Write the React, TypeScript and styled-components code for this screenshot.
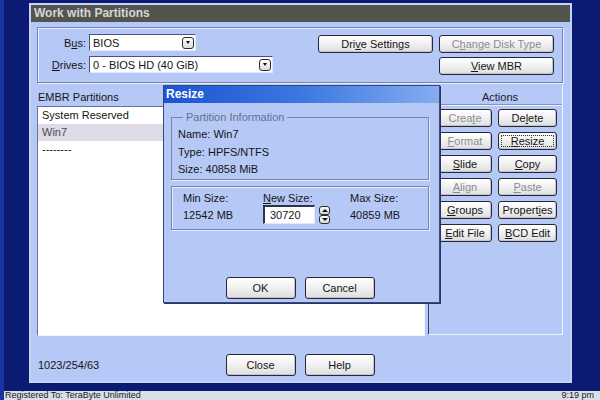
import React from 'react';
import styled, { createGlobalStyle, css } from 'styled-components';

const GlobalStyle = createGlobalStyle`
  html, body {
    margin: 0;
    padding: 0;
    background: #0b1a72;
  }
  body {
    font-family: "Liberation Sans", Arial, sans-serif;
    font-size: 11px;
    color: #151515;
  }
  * {
    box-sizing: border-box;
  }
`;

const Screen = styled.div`
  width: 600px;
  height: 400px;
  overflow: hidden;
  display: flex;
  flex-direction: column;
  background: #0b1a72;
  border-left: 4px solid #1a34a0;
`;

const Window = styled.div`
  position: relative;
  width: 543px;
  height: 380px;
  margin: 3px 0 0 25px;
  border: 2px solid #c6d3f7;
  background: #b6c8f6;
  display: flex;
  flex-direction: column;
`;

const TitleBar = styled.div`
  height: 17px;
  line-height: 17px;
  padding-left: 3px;
  background: #54544e;
  color: #d6d6d6;
  font-size: 12px;
  font-weight: bold;
`;

const Body = styled.div`
  height: 359px;
  padding: 5px 7px 5px 6px;
  display: flex;
  flex-direction: column;
`;

const etched = css`
  border: 1px solid #7886ac;
  box-shadow: inset 1px 1px 0 #e6ecff, 1px 1px 0 #e6ecff;
`;

const TopGroup = styled.div`
  ${etched};
  height: 56px;
  display: flex;
  padding: 6px 8px 0 0;
`;

const ComboGrid = styled.div`
  display: grid;
  grid-template-columns: 48px auto;
  column-gap: 3px;
  row-gap: 5px;
  align-content: start;
  align-items: center;
`;

const FieldLabel = styled.span`
  text-align: right;
`;

const Combo = styled.div<{ $width: number }>`
  width: ${({ $width }) => $width}px;
  height: 17px;
  background: #fff;
  border: 1px solid;
  border-color: #44547c #e2e8ff #e2e8ff #44547c;
  display: flex;
  align-items: center;
  padding-left: 3px;
`;

const DropArrow = styled.span`
  width: 12px;
  height: 12px;
  margin-left: auto;
  margin-right: 1px;
  border: 1px solid #2c2c34;
  border-radius: 3px;
  background: linear-gradient(#ffffff, #dcdcdc);
  display: flex;
  align-items: center;
  justify-content: center;
  &::after {
    content: '';
    border-left: 2.5px solid transparent;
    border-right: 2.5px solid transparent;
    border-top: 3px solid #111;
  }
`;

const TopButtons = styled.div`
  margin-left: auto;
  padding-top: 1px;
  display: grid;
  grid-template-columns: 115px 115px;
  grid-auto-rows: 18px;
  column-gap: 6px;
  row-gap: 4px;
`;

const Btn = styled.button<{ $off?: boolean; $focus?: boolean }>`
  height: 100%;
  padding: 0;
  font-family: inherit;
  font-size: 11px;
  color: ${({ $off }) => ($off ? '#8c8c94' : '#151515')};
  background: linear-gradient(#ffffff, #f2f2f2 45%, #dedede);
  border: 1px solid #26283a;
  border-radius: 3px;
  box-shadow: inset -1px -1px 0 #c4c4cc;
  outline: ${({ $focus }) => ($focus ? '1px dotted #333' : 'none')};
  outline-offset: -4px;
  white-space: nowrap;
  u {
    text-decoration: underline;
  }
`;

const Middle = styled.div`
  height: 251px;
  margin-top: 2px;
  display: flex;
`;

const ListColumn = styled.div`
  width: 388px;
  display: flex;
  flex-direction: column;
`;

const ListTitle = styled.div`
  height: 21px;
  padding: 6px 0 0 1px;
  line-height: 13px;
`;

const ListBox = styled.div`
  flex: 1;
  background: #fff;
  border: 1px solid;
  border-color: #6474a0 #f4f6ff #f4f6ff #6474a0;
`;

const ListRow = styled.div<{ $selected?: boolean }>`
  height: 17px;
  line-height: 17px;
  padding-left: 4px;
  background: ${({ $selected }) => ($selected ? '#dedbe6' : 'transparent')};
  color: ${({ $selected }) => ($selected ? '#4a4a52' : '#151515')};
`;

const ActionsPanel = styled.div`
  width: 135px;
  margin-left: 3px;
  border-left: 1px solid #34446e;
  border-right: 1px solid #eef2ff;
  border-bottom: 1px solid #eef2ff;
  height: 250px;
`;

const ActionsTitle = styled.div`
  height: 20px;
  margin-left: 9px;
  padding-top: 6px;
  line-height: 13px;
  text-align: center;
  border-bottom: 1px solid #8494bc;
  box-shadow: 0 1px 0 #e6ecff;
  color: #1c1c30;
`;

const ActionGrid = styled.div`
  display: grid;
  grid-template-columns: 54px 59px;
  grid-auto-rows: 18px;
  column-gap: 6px;
  row-gap: 5px;
  padding: 4px 0 0 9px;
`;

const BottomRow = styled.div`
  height: 22px;
  margin-top: 18px;
  display: grid;
  grid-template-columns: 1fr auto 1fr;
  align-items: center;
`;

const Geometry = styled.span`
  padding-left: 1px;
`;

const ButtonPair = styled.div`
  display: grid;
  grid-template-columns: 70px 70px;
  grid-auto-rows: 22px;
  column-gap: 9px;
`;

const Dialog = styled.div`
  position: absolute;
  left: 132px;
  top: 80px;
  width: 277px;
  height: 218px;
  background: #b6c8f6;
  border: 1px solid #3a4a74;
  box-shadow: 1px 1px 0 #28346a;
  display: flex;
  flex-direction: column;
`;

const DialogTitle = styled.div`
  height: 17px;
  line-height: 17px;
  padding-left: 2px;
  color: #fff;
  font-size: 12px;
  font-weight: bold;
  background: linear-gradient(90deg, #1a54d2, #3b78e0 50%, #86acf0);
`;

const DialogBody = styled.div`
  flex: 1;
  padding: 8px 10px 3px 7px;
  display: flex;
  flex-direction: column;
`;

const InfoGroup = styled.fieldset`
  margin: 0;
  height: 69px;
  padding: 2px 6px 0 6px;
  border: 1px solid #7886ac;
  box-shadow: 1px 1px 0 #e6ecff;
`;

const Legend = styled.legend`
  margin-left: 5px;
  padding: 0 3px;
  line-height: 13px;
  color: #68708c;
`;

const InfoLine = styled.div`
  height: 17.5px;
  line-height: 17.5px;
`;

const SizeGroup = styled.div`
  ${etched};
  height: 44px;
  margin-top: 6px;
  padding: 4px 0 0 11px;
  display: grid;
  grid-template-columns: 80px 87px auto;
  grid-template-rows: 13px 19px;
  row-gap: 1px;
  align-items: center;
`;

const Spin = styled.div`
  display: flex;
  align-items: center;
  gap: 4px;
`;

const NumberField = styled.div`
  width: 52px;
  height: 19px;
  padding-left: 5px;
  line-height: 17px;
  background: #fff;
  border: 1px solid;
  border-width: 2px 1px 1px 2px;
  border-color: #30344a #e2e8ff #e2e8ff #30344a;
`;

const SpinButtons = styled.div`
  display: grid;
  grid-auto-rows: 9px;
  row-gap: 0;
`;

const SpinBtn = styled.span<{ $up?: boolean }>`
  width: 11px;
  border: 1px solid #2c2c34;
  border-radius: 3px;
  background: linear-gradient(#ffffff, #d8d8d8);
  display: flex;
  align-items: center;
  justify-content: center;
  &::after {
    content: '';
    border-left: 3px solid transparent;
    border-right: 3px solid transparent;
    ${({ $up }) => ($up ? 'border-bottom: 3px solid #111;' : 'border-top: 3px solid #111;')}
  }
`;

const DialogButtons = styled(ButtonPair)`
  margin-top: auto;
  justify-content: center;
`;

const StatusBar = styled.div`
  height: 9px;
  margin-top: auto;
  margin-left: -4px;
  padding: 0 6px 0 5px;
  overflow: hidden;
  display: flex;
  justify-content: space-between;
  align-items: center;
  background: #dadee8;
  color: #1a1a1a;
  font-size: 9px;
  line-height: 9px;
`;

const actions: { label: React.ReactNode; off?: boolean; focus?: boolean }[] = [
  { label: <>Crea<u>t</u>e</>, off: true },
  { label: <>De<u>l</u>ete</> },
  { label: <><u>F</u>ormat</>, off: true },
  { label: <><u>R</u>esize</>, focus: true },
  { label: <><u>S</u>lide</> },
  { label: <><u>C</u>opy</> },
  { label: <><u>A</u>lign</>, off: true },
  { label: <><u>P</u>aste</>, off: true },
  { label: <><u>G</u>roups</> },
  { label: <>Propert<u>i</u>es</> },
  { label: <><u>E</u>dit File</> },
  { label: <><u>B</u>CD Edit</> },
];

const App = () => {
  return (
    <>
      <GlobalStyle />
      <Screen>
        <Window>
          <TitleBar>Work with Partitions</TitleBar>
          <Body>
            <TopGroup>
              <ComboGrid>
                <FieldLabel>
                  B<u>u</u>s:
                </FieldLabel>
                <Combo $width={107}>
                  BIOS
                  <DropArrow />
                </Combo>
                <FieldLabel>
                  <u>D</u>rives:
                </FieldLabel>
                <Combo $width={184}>
                  0 - BIOS HD (40 GiB)
                  <DropArrow />
                </Combo>
              </ComboGrid>
              <TopButtons>
                <Btn>
                  Dri<u>v</u>e Settings
                </Btn>
                <Btn $off>
                  C<u>h</u>ange Disk Type
                </Btn>
                <span />
                <Btn>
                  <u>V</u>iew MBR
                </Btn>
              </TopButtons>
            </TopGroup>

            <Middle>
              <ListColumn>
                <ListTitle>EMBR Partitions</ListTitle>
                <ListBox>
                  <ListRow>System Reserved</ListRow>
                  <ListRow $selected>Win7</ListRow>
                  <ListRow>--------</ListRow>
                </ListBox>
              </ListColumn>
              <ActionsPanel>
                <ActionsTitle>Actions</ActionsTitle>
                <ActionGrid>
                  {actions.map((a, i) => (
                    <Btn key={i} $off={a.off} $focus={a.focus}>
                      {a.label}
                    </Btn>
                  ))}
                </ActionGrid>
              </ActionsPanel>
            </Middle>

            <BottomRow>
              <Geometry>1023/254/63</Geometry>
              <ButtonPair>
                <Btn>Close</Btn>
                <Btn>Help</Btn>
              </ButtonPair>
              <span />
            </BottomRow>
          </Body>

          <Dialog>
            <DialogTitle>Resize</DialogTitle>
            <DialogBody>
              <InfoGroup>
                <Legend>Partition Information</Legend>
                <InfoLine>Name: Win7</InfoLine>
                <InfoLine>Type: HPFS/NTFS</InfoLine>
                <InfoLine>Size: 40858 MiB</InfoLine>
              </InfoGroup>
              <SizeGroup>
                <span>Min Size:</span>
                <span>
                  <u>N</u>ew Size:
                </span>
                <span>Max Size:</span>
                <span>12542 MB</span>
                <Spin>
                  <NumberField>30720</NumberField>
                  <SpinButtons>
                    <SpinBtn $up />
                    <SpinBtn />
                  </SpinButtons>
                </Spin>
                <span>40859 MB</span>
              </SizeGroup>
              <DialogButtons>
                <Btn>OK</Btn>
                <Btn>Cancel</Btn>
              </DialogButtons>
            </DialogBody>
          </Dialog>
        </Window>
        <StatusBar>
          <span>Registered To: TeraByte Unlimited</span>
          <span>9:19 pm</span>
        </StatusBar>
      </Screen>
    </>
  );
};

export default App;
